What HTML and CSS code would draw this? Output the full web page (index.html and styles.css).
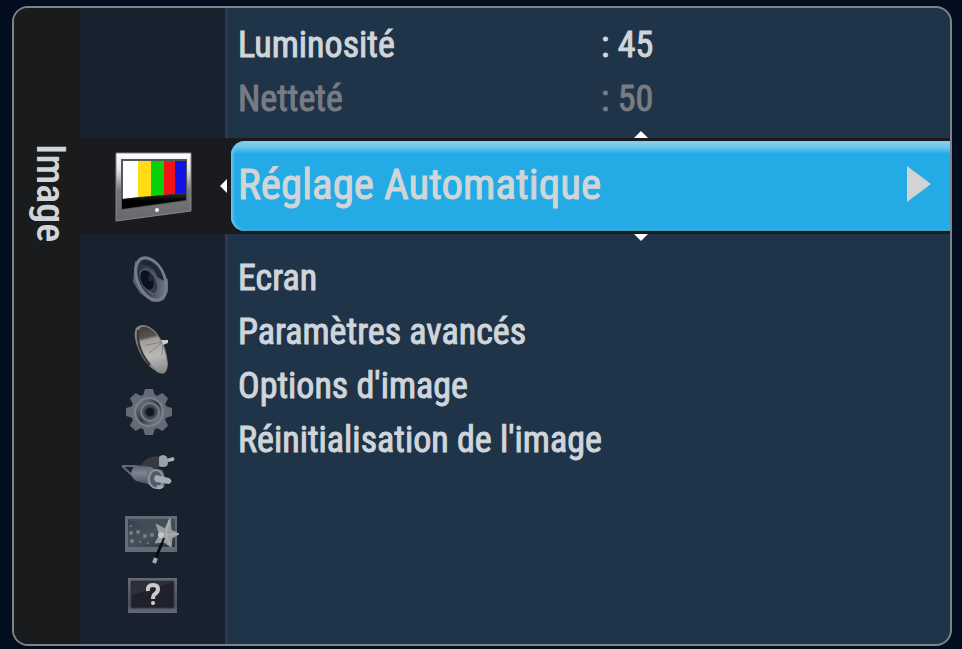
FILE: index.html
```html
<!DOCTYPE html>
<html lang="fr">
<head>
<meta charset="utf-8">
<meta name="viewport" content="width=device-width, initial-scale=1">
<title>Image</title>
<link rel="stylesheet" href="styles.css">
</head>
<body>
<main class="panel">
  <header class="side-title"><h1>Image</h1></header>
  <div class="menu">
    <div class="rail"></div>
    <ul class="list list-top">
      <li><button class="item" type="button"><span class="name">Luminosité</span><span>: 45</span></button></li>
      <li><button class="item" type="button" disabled><span class="name">Netteté</span><span>: 50</span></button></li>
    </ul>

    <div class="band">
      <button class="current" type="button" aria-label="Catégorie Image">
        <svg width="80" height="76" viewBox="0 0 80 76">
          <defs>
            <linearGradient id="tv" x1="0" y1="0" x2="0" y2="1"><stop offset="0" stop-color="#fff"/><stop offset=".25" stop-color="#e4e4e6"/><stop offset=".55" stop-color="#77777b"/><stop offset="1" stop-color="#68696d"/></linearGradient>
            <linearGradient id="tvb" x1="0" y1="0" x2="0" y2="1"><stop offset="0" stop-color="#303030"/><stop offset=".5" stop-color="#000"/></linearGradient>
          </defs>
          <path d="M3 5H78V63L3 73Z" fill="url(#tv)" stroke="#85868a"/>
          <path d="M8 11H74V53L8 62Z" fill="#55565a"/>
          <path d="M10 13H25V49L10 51Z" fill="#fff"/>
          <path d="M25 13H38V48L25 49Z" fill="#ffdc14"/>
          <path d="M38 13H51V47L38 48Z" fill="#0ad00c"/>
          <path d="M51 13H62V46L51 47Z" fill="#f51216"/>
          <path d="M62 13H73V45L62 46Z" fill="#1212e4"/>
          <path d="M9 51L73 45V52L9 61Z" fill="url(#tvb)"/>
          <circle cx="44" cy="62" r="2" fill="#f2f2f2"/>
        </svg>
      </button>
      <svg class="mark-left" width="8" height="14" viewBox="0 0 8 14"><path d="M0 7L7 0V14Z" fill="#fff"/></svg>
      <div class="selected">
        <svg class="mark-up" width="14" height="7" viewBox="0 0 14 7"><path d="M0 7L7 0L14 7Z" fill="#fff"/></svg>
        <button class="highlight" type="button">
          <span>Réglage Automatique</span>
          <svg width="24" height="36" viewBox="0 0 24 36"><path d="M0 0L24 18L0 36Z" fill="#d2d3d5"/></svg>
        </button>
        <svg class="mark-down" width="14" height="7" viewBox="0 0 14 7"><path d="M0 0H14L7 7Z" fill="#fff"/></svg>
      </div>
    </div>

    <nav class="rail icons">
      <button type="button" aria-label="Son">
        <svg width="64" height="64" viewBox="0 0 64 64">
          <defs><linearGradient id="cone" x1="0" y1="0" x2="1" y2="1"><stop offset="0" stop-color="#252b3a"/><stop offset=".45" stop-color="#3b4050"/><stop offset="1" stop-color="#80889b"/></linearGradient></defs>
          <path d="M17 13L15 34L22 45L34 54L46 52L50 43V31Z" fill="#555f70"/>
          <ellipse cx="33" cy="31" rx="15" ry="24" transform="rotate(-24 33 31)" fill="#727d90"/>
          <ellipse cx="33" cy="31" rx="12" ry="21" transform="rotate(-24 33 31)" fill="url(#cone)"/>
          <path d="M26 12Q42 13 46 33L39 29Q37 18 22 16Z" fill="#1f2635"/>
          <path d="M22 24Q30 15 38 31Q43 42 36 46Q22 42 22 24" fill="#353b4b" stroke="#626979"/>
          <ellipse cx="29" cy="32" rx="6" ry="10" transform="rotate(-24 29 32)" fill="#0d111d"/>
          <circle cx="33" cy="30" r="3" fill="#23293a"/>
        </svg>
      </button>
      <button type="button" aria-label="Chaînes">
        <svg width="64" height="64" viewBox="0 0 64 64">
          <defs><linearGradient id="dish" gradientUnits="userSpaceOnUse" x1="26" y1="12" x2="38" y2="62"><stop offset="0" stop-color="#3c3935"/><stop offset=".26" stop-color="#57534f"/><stop offset=".32" stop-color="#a19f99"/><stop offset=".65" stop-color="#bab9b5"/><stop offset="1" stop-color="#88888a"/></linearGradient></defs>
          <path d="M19 15Q27 9 38 20Q49 34 50 52Q49 66 39 60Q24 51 18 31Q15 19 19 15Z" fill="#85837e"/>
          <path d="M22 16Q29 12 38 22Q47 34 49 52Q48 63 40 59Q28 50 22 34Q18 21 22 16Z" fill="url(#dish)"/>
          <path d="M20 18Q18 36 32 53" fill="none" stroke="#383734" stroke-width="2"/>
          <path d="M31 41L45 30M45 30L44 43M45 30L28 33" fill="none" stroke="#858480" stroke-width="1"/>
          <path d="M43 28L50 28V31L45 33Z" fill="#c9c9c5"/>
        </svg>
      </button>
      <button type="button" aria-label="Configuration">
        <svg width="64" height="64" viewBox="0 0 64 64">
          <defs><linearGradient id="ring" x1="0" y1="0" x2="1" y2="1"><stop offset="0" stop-color="#89909b"/><stop offset=".5" stop-color="#303744"/><stop offset="1" stop-color="#9299a5"/></linearGradient></defs>
          <g fill="#646b76">
            <circle cx="31" cy="36" r="18"/>
            <path id="tooth" d="M25 20L27 13H35L37 20V52L35 59H27L25 52Z"/>
            <use href="#tooth" transform="rotate(45 31 36)"/><use href="#tooth" transform="rotate(90 31 36)"/><use href="#tooth" transform="rotate(135 31 36)"/>
          </g>
          <circle cx="31" cy="36" r="14" fill="url(#ring)" stroke="#7b828e" stroke-width="2"/>
          <circle cx="32" cy="36" r="9" fill="#4b535f" stroke="#767e89" stroke-width="2"/>
          <circle cx="32" cy="36" r="5" fill="#111822" stroke="#333b46" stroke-width="2"/>
        </svg>
      </button>
      <button type="button" aria-label="Sources">
        <svg width="64" height="64" viewBox="0 0 64 64">
          <defs><linearGradient id="plug" x1="0" y1="0" x2="0" y2="1"><stop offset="0" stop-color="#555e6b"/><stop offset=".4" stop-color="#7b848f"/><stop offset="1" stop-color="#47505c"/></linearGradient></defs>
          <path d="M4 26L17 26M4 26L14 35" fill="none" stroke="#626a75" stroke-width="2"/>
          <path d="M22 26Q27 19 33 17L42 16V27L30 31Z" fill="#353a42"/>
          <path d="M41 17Q45 13 49 17Q51 22 49 26Q44 28 41 26Z" fill="#99a1aa"/><path d="M49 19L55 17Q58 19 55 21L50 22Z" fill="#a9b0b7"/>
          <path d="M17 25L34 27Q40 36 34 45L18 41Q9 34 17 25" fill="url(#plug)"/>
          <path d="M31 28L44 30Q49 38 46 47L37 49L30 44Q26 36 31 28" fill="#6b747f"/>
          <ellipse cx="38" cy="39" rx="7" ry="9" fill="#525b67" stroke="#8b939d" stroke-width="2"/>
          <path d="M38 35L51 38Q56 41 51 44L38 42Q34 39 38 35Z" fill="#a5acb4"/>
          <path d="M39 45L46 46Q44 50 39 49Z" fill="#a0a8b0"/>
        </svg>
      </button>
      <button type="button" aria-label="Effets">
        <svg width="64" height="64" viewBox="0 0 64 64">
          <defs><linearGradient id="photo" x1="0" y1="0" x2="1" y2="1"><stop offset="0" stop-color="#35414b"/><stop offset=".5" stop-color="#45515b"/><stop offset="1" stop-color="#2b3742"/></linearGradient></defs>
          <path d="M7 12H59V48H7Z" fill="#606d78"/>
          <path d="M10 15H57V43H10Z" fill="url(#photo)"/>
          <path d="M10 15L32 25L57 15Z" fill="#404d57"/>
          <g fill="#75818a"><circle cx="13" cy="29" r="2"/><circle cx="20" cy="28" r="2"/><circle cx="27" cy="32" r="2"/><circle cx="34" cy="31" r="2"/><circle cx="14" cy="37" r="2"/><circle cx="22" cy="38" r="1"/><circle cx="30" cy="39" r="1"/><circle cx="13" cy="22" r="1"/></g>
          <path d="M46 34L37 56" stroke="#080b0e" stroke-width="3"/><path d="M38 54L36 59" stroke="#a3aaae" stroke-width="4"/>
          <path d="M52 14L53 26L61 30L54 34L53 43L46 38L37 39L42 31L38 20L47 25Z" fill="#9b9fa2" stroke="#9b9fa2" stroke-linejoin="round"/>
          <path d="M51 16L48 31L60 30M48 31L52 41" fill="none" stroke="#b5b8ba"/>
          <circle cx="43" cy="31" r="3" fill="#c5c9cc"/>
          <path d="M46 34L42 44" stroke="#0a0d10" stroke-width="2"/>
        </svg>
      </button>
      <button type="button" aria-label="Aide">
        <svg width="64" height="64" viewBox="0 0 64 64">
          <defs><linearGradient id="help" x1="0" y1="0" x2="0" y2="1"><stop offset="0" stop-color="#666c76"/><stop offset=".75" stop-color="#4b505b"/><stop offset="1" stop-color="#646a76"/></linearGradient></defs>
          <path d="M10 10H59V45H10Z" fill="url(#help)"/>
          <path d="M13 13H56V40H13Z" fill="#20212d" stroke="#353943"/>
          <path d="M14 14H55L14 27Z" fill="#2d303b"/>
          <path d="M30 23Q29 17 35 17Q40 17 40 21Q40 24 37 26Q35 27 35 31" fill="none" stroke="#c9cbcc" stroke-width="4"/>
          <circle cx="35" cy="35" r="2" fill="#d0d2d3"/>
        </svg>
      </button>
    </nav>
    <ul class="list list-bottom">
      <li><button class="item" type="button">Ecran</button></li>
      <li><button class="item" type="button">Paramètres avancés</button></li>
      <li><button class="item" type="button">Options d'image</button></li>
      <li><button class="item" type="button">Réinitialisation de l'image</button></li>
    </ul>
  </div>
</main>
</body>
</html>
```
FILE: styles.css
```css
* { box-sizing: border-box; }

body {
  margin: 0;
  min-height: 100vh;
  display: flex;
  padding: 6px 10px 3px 12px;
  background: #020e20;
  color: #d0d5da;
  font-family: "Roboto Condensed", "Liberation Sans Narrow", Roboto, sans-serif;
  font-weight: 400;
}

button {
  margin: 0;
  padding: 0;
  border: 0;
  background: none;
  color: inherit;
  font: inherit;
  text-align: left;
}

svg { display: block; }

.panel {
  flex: 1;
  display: flex;
  overflow: hidden;
  border: 2px solid #7e838a;
  border-radius: 16px;
  background: #1f3349;
}

.side-title {
  flex: 0 0 66px;
  padding: 136px 0 0 12px;
  background: #1a1b1d;
}

.side-title h1 {
  margin: 0;
  writing-mode: vertical-rl;
  font-size: 40px;
  line-height: 48px;
  font-weight: 500;
}

.menu {
  flex: 1;
  display: grid;
  grid-template-columns: 148px 1fr;
  grid-template-rows: auto auto 1fr;
}

.rail {
  background: #18222e;
  border-right: 3px solid #2a3a53;
}

.list {
  margin: 0;
  list-style: none;
  font-size: 36px;
  line-height: 54px;
  -webkit-text-stroke: 1px currentColor;
}

.list-top { padding: 10px 0 12px 10px; }

.list-bottom { padding: 17px 0 0 10px; }

.item {
  display: flex;
  width: 100%;
}

.item:disabled { color: #777c82; }

.name { width: 363px; }

.band {
  grid-column: 1 / -1;
  display: flex;
  align-items: center;
  height: 96px;
  background: #1a1b1e;
}

.current {
  flex: 1 0 140px;
  max-width: 140px;
  padding-left: 33px;
}

.mark-left { margin-right: 3px; }

.selected {
  flex: 1;
  position: relative;
}

.highlight {
  display: flex;
  justify-content: space-between;
  align-items: center;
  width: 100%;
  height: 90px;
  padding: 0 19px 4px 7px;
  border-radius: 14px 0 0 14px;
  background: linear-gradient(#8ed2f0, #6dc6ec 6px, #24aae4 13px, #24aae4);
  box-shadow: inset 2px 0 3px #6fc8ee, inset 0 -1px 0 #178ba8;
  color: #d2d5d8;
  font-size: 43px;
  -webkit-text-stroke: 1px currentColor;
}

.mark-up,
.mark-down {
  position: absolute;
  left: 403px;
}

.mark-up { top: -10px; }

.mark-down { bottom: -10px; }

.icons {
  display: flex;
  flex-direction: column;
  padding: 14px 0 0 38px;
}
```
